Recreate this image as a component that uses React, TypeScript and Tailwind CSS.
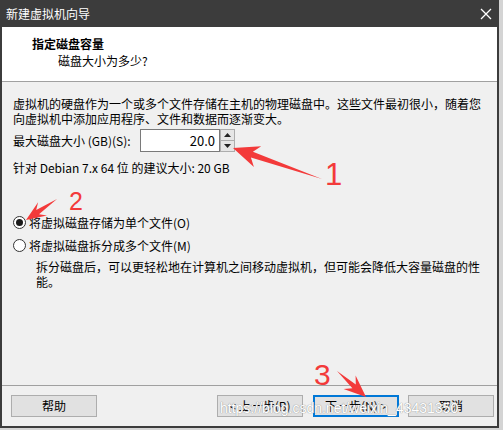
const cjk = { fontFamily: '"Noto Sans CJK SC", "Noto Sans", sans-serif' };

type Pt = [number, number];

function arrowPoints(tail: Pt, tip: Pt, head = 22, half = 10, shaft = 3) {
  const dx = tip[0] - tail[0];
  const dy = tip[1] - tail[1];
  const len = Math.hypot(dx, dy);
  const ux = dx / len;
  const uy = dy / len;
  const nx = -uy;
  const ny = ux;
  const b: Pt = [tip[0] - ux * (head - 6), tip[1] - uy * (head - 6)];
  const bb: Pt = [tip[0] - ux * head, tip[1] - uy * head];
  const pts: Pt[] = [
    tail,
    [b[0] + nx * shaft, b[1] + ny * shaft],
    [bb[0] + nx * half, bb[1] + ny * half],
    tip,
    [bb[0] - nx * half, bb[1] - ny * half],
    [b[0] - nx * shaft, b[1] - ny * shaft],
  ];
  return pts.map((p) => `${p[0].toFixed(1)},${p[1].toFixed(1)}`).join(" ");
}

function Radio({ checked }: { checked?: boolean }) {
  return (
    <span className="flex h-[13px] w-[13px] shrink-0 items-center justify-center rounded-full border border-[#333] bg-white">
      {checked && <span className="h-[7px] w-[7px] rounded-full bg-[#1a1a1a]" />}
    </span>
  );
}

function Btn({ children, active }: { children: React.ReactNode; active?: boolean }) {
  return (
    <div
      className={
        "flex h-[22px] w-[86px] items-center justify-center bg-[#e1e1e1] text-[12px] text-black " +
        (active ? "border-2 border-[#0078d7]" : "border border-[#adadad]")
      }
    >
      {children}
    </div>
  );
}

export default function App() {
  return (
    <div className="relative h-[430px] w-[503px] overflow-hidden bg-[#d4d4d4]" style={cjk}>
      <div className="flex h-[428px] w-[499px] flex-col border-x-2 border-b-2 border-[#3c3c3c] bg-[#f0f0f0]">
        {/* title bar */}
        <div className="flex h-[27px] shrink-0 items-center justify-between bg-[#3c3c3c] pl-[4px] pr-[4px] text-[12px] text-white">
          <span>新建虚拟机向导</span>
          <svg width="12" height="12" viewBox="0 0 12 12" className="mr-[1px]">
            <path d="M1 1 L11 11 M11 1 L1 11" stroke="#fff" strokeWidth="1.3" />
          </svg>
        </div>

        {/* header */}
        <div className="h-[55px] shrink-0 border-b border-[#a0a0a0] bg-white pl-[30px] pt-[8px]">
          <div className="text-[12px] font-bold leading-[17px] text-black">指定磁盘容量</div>
          <div className="pl-[26px] text-[12px] leading-[17px] text-black">磁盘大小为多少?</div>
        </div>

        {/* body */}
        <div className="flex-1 pl-[11px] pr-[12px] pt-[14px] text-[12px] leading-[15px] text-black">
          <p>
            虚拟机的硬盘作为一个或多个文件存储在主机的物理磁盘中。这些文件最初很小，随着您
            <br />
            向虚拟机中添加应用程序、文件和数据而逐渐变大。
          </p>

          <div className="mt-[3px] flex items-center">
            <span className="w-[127px]">最大磁盘大小 (GB)(S):</span>
            <div className="flex h-[23px] w-[80px] items-center justify-end border border-[#7a7a7a] bg-white pr-[4px] text-[13px]">
              20.0
            </div>
            <div className="flex h-[23px] w-[15px] flex-col">
              <div className="flex flex-1 items-center justify-center border border-[#adadad] bg-[#e6e6e6]">
                <svg width="7" height="4" viewBox="0 0 7 4">
                  <path d="M0 4 L3.5 0 L7 4 Z" fill="#222" />
                </svg>
              </div>
              <div className="flex flex-1 items-center justify-center border border-t-0 border-[#adadad] bg-[#e6e6e6]">
                <svg width="7" height="4" viewBox="0 0 7 4">
                  <path d="M0 0 L7 0 L3.5 4 Z" fill="#222" />
                </svg>
              </div>
            </div>
          </div>

          <p className="mt-[8px]">针对 Debian 7.x 64 位 的建议大小: 20 GB</p>

          <div className="mt-[40px] flex h-[15px] items-center gap-[3px]">
            <Radio checked />
            <span>将虚拟磁盘存储为单个文件(O)</span>
          </div>
          <div className="mt-[8px] flex h-[15px] items-center gap-[3px]">
            <Radio />
            <span>将虚拟磁盘拆分成多个文件(M)</span>
          </div>
          <p className="mt-[6px] pl-[23px]">
            拆分磁盘后，可以更轻松地在计算机之间移动虚拟机，但可能会降低大容量磁盘的性
            <br />
            能。
          </p>
        </div>

        {/* footer */}
        <div className="flex h-[41px] shrink-0 items-start border-t border-[#a0a0a0] pl-[9px] pr-[3px] pt-[9px]">
          <Btn>帮助</Btn>
          <div className="ml-auto flex gap-[9px]">
            <div className="flex gap-[10px]">
              <Btn>&lt; 上一步(B)</Btn>
              <Btn active>下一步(N) &gt;</Btn>
            </div>
            <Btn>取消</Btn>
          </div>
        </div>
      </div>

      {/* watermark */}
      <div
        className="pointer-events-none absolute left-[220px] top-[398px] text-[14px] text-white"
        style={{
          fontFamily: '"Liberation Sans", Arial, sans-serif',
          textShadow: "0 0 1px #9a9a9a, 0 0 1px #9a9a9a",
        }}
      >
        https://blog.csdn.net/weixin_43431350
      </div>

      {/* annotations */}
      <svg className="pointer-events-none absolute left-0 top-0" width="503" height="430">
        <polygon points={arrowPoints([322, 179], [233, 148], 26, 11, 3)} fill="#f33a3a" />
        <polygon points={arrowPoints([57, 199], [26, 220], 20, 8, 2.5)} fill="#f33a3a" />
        <polygon points={arrowPoints([337, 371], [366, 397], 22, 9, 2.5)} fill="#f33a3a" />
      </svg>
      <div
        className="pointer-events-none absolute left-[325px] top-[157px] text-[31px] leading-[36px] text-[#f33a3a]"
        style={{ fontFamily: '"Liberation Sans", Arial, sans-serif' }}
      >
        1
      </div>
      <div
        className="pointer-events-none absolute left-[69px] top-[186px] text-[25px] leading-[30px] text-[#f33a3a]"
        style={{ fontFamily: '"Liberation Sans", Arial, sans-serif' }}
      >
        2
      </div>
      <div
        className="pointer-events-none absolute left-[314px] top-[358px] text-[30px] leading-[34px] text-[#f33a3a]"
        style={{ fontFamily: '"Liberation Sans", Arial, sans-serif' }}
      >
        3
      </div>
    </div>
  );
}
